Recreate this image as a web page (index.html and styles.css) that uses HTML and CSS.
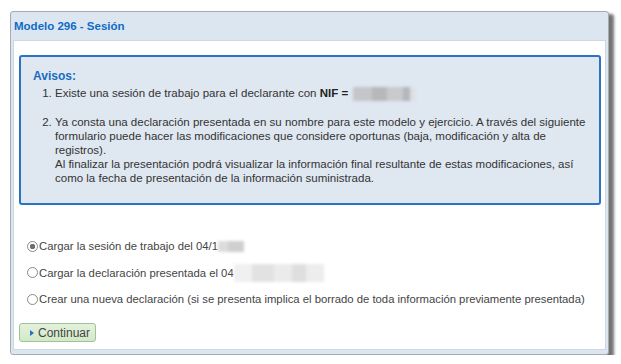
FILE: index.html
```html
<!DOCTYPE html>
<html lang="es">
<head>
<meta charset="UTF-8">
<title>Modelo 296 - Sesión</title>
<link rel="stylesheet" href="styles.css">
</head>
<body>

<div class="dialog">
    <div class="dialog-title">Modelo 296 - Sesión</div>
    <div class="dialog-body">
        <div class="notice">
            <div class="notice-title">Avisos:</div>
            <ol class="notice-list">
                <li>Existe una sesión de trabajo para el declarante con <b>NIF =</b> <span class="blur blur-nif"></span></li>
                <li>Ya consta una declaración presentada en su nombre para este modelo y ejercicio. A través del siguiente formulario puede hacer las modificaciones que considere oportunas (baja, modificación y alta de registros).<br>Al finalizar la presentación podrá visualizar la información final resultante de estas modificaciones, así como la fecha de presentación de la información suministrada.</li>
            </ol>
        </div>

        <div class="options">
            <label class="option"><input type="radio" name="accion" checked>Cargar la sesión de trabajo del 04/1<span class="blur blur-date"></span></label>
            <label class="option"><input type="radio" name="accion">Cargar la declaración presentada el 04<span class="blur blur-long"></span></label>
            <label class="option"><input type="radio" name="accion">Crear una nueva declaración (si se presenta implica el borrado de toda información previamente presentada)</label>
        </div>

        <button class="btn-continue"><span class="arrow"></span>Continuar</button>
    </div>
</div>

</body>
</html>
```

FILE: styles.css
```css
body {
    margin: 0;
    padding: 11px 0 0 10px;
    font-family: "Liberation Sans", Arial, sans-serif;
    background: #fff;
}
.dialog {
    width: 593px;
    height: 338px;
    border: 1px solid #a4abb2;
    border-radius: 3px;
    background: #dce6f0;
    box-shadow: 5px 3px 3px rgba(0, 0, 0, 0.55);
    display: flex;
    flex-direction: column;
    padding: 0 2px 4px 2px;
}
.dialog-title {
    height: 28px;
    line-height: 29px;
    padding-left: 1px;
    font-size: 11.5px;
    font-weight: bold;
    color: #0f6bc6;
}
.dialog-body {
    flex: 1;
    background: #fff;
    border: 1px solid #cdd8e3;
    padding: 14px 4px 0 5px;
    display: flex;
    flex-direction: column;
}
.notice {
    box-sizing: border-box;
    height: 150px;
    border: 2px solid #2a72c4;
    border-radius: 3px;
    background: #dfe7f1;
    padding: 12px 12px 0 12px;
    font-size: 11.5px;
    color: #333;
}
.notice-title {
    font-weight: bold;
    color: #1a6bc4;
    font-size: 12px;
    line-height: 14px;
}
.notice-list {
    margin: 3px 0 0 0;
    padding-left: 22px;
    line-height: 14px;
}
.notice-list li {
    margin-bottom: 14px;
}
.notice-list b {
    color: #222;
}
.blur {
    display: inline-block;
    vertical-align: middle;
    filter: blur(1.5px);
}
.blur-nif {
    width: 62px;
    height: 14px;
    margin-left: 2px;
    background: linear-gradient(to right, #c4c6c9 0 30%, #b6b8bb 30% 55%, #c8cacc 55% 80%, #b4b6b9 80% 92%, #dde0e3 92%);
}
.blur-date {
    width: 26px;
    height: 11px;
    background: linear-gradient(to right, #dcdcdc 0 40%, #cfcfcf 40% 100%);
}
.blur-long {
    width: 90px;
    height: 18px;
    background: linear-gradient(to right, #f0f0f0 0 20%, #e2e2e2 20% 45%, #ebebeb 45% 65%, #dedede 65% 80%, #ededed 80%);
}
.options {
    margin-top: 34px;
    display: flex;
    flex-direction: column;
    gap: 12.5px;
}
.option {
    display: flex;
    align-items: center;
    height: 14px;
    font-size: 11.3px;
    color: #444;
    padding-left: 8px;
}
.option input {
    appearance: none;
    width: 11px;
    height: 11px;
    margin: 0 1px 0 0;
    border: 1px solid #8a8a8a;
    border-radius: 50%;
    background: #fff;
}
.option input:checked {
    background: radial-gradient(circle, #6f6f6f 0 2.5px, #fff 3px);
}
.btn-continue {
    align-self: flex-start;
    margin-top: 17px;
    height: 19px;
    width: 77px;
    padding: 0 0 0 10px;
    border: 1px solid #9cc496;
    border-radius: 3px;
    background: linear-gradient(to bottom, #e4f2dc, #d2e8c8);
    font-family: "Liberation Sans", Arial, sans-serif;
    font-size: 12px;
    color: #444;
    display: flex;
    align-items: center;
    gap: 4px;
}
.arrow {
    width: 0;
    height: 0;
    border-top: 3.5px solid transparent;
    border-bottom: 3.5px solid transparent;
    border-left: 4px solid #2a6ebf;
}
```
